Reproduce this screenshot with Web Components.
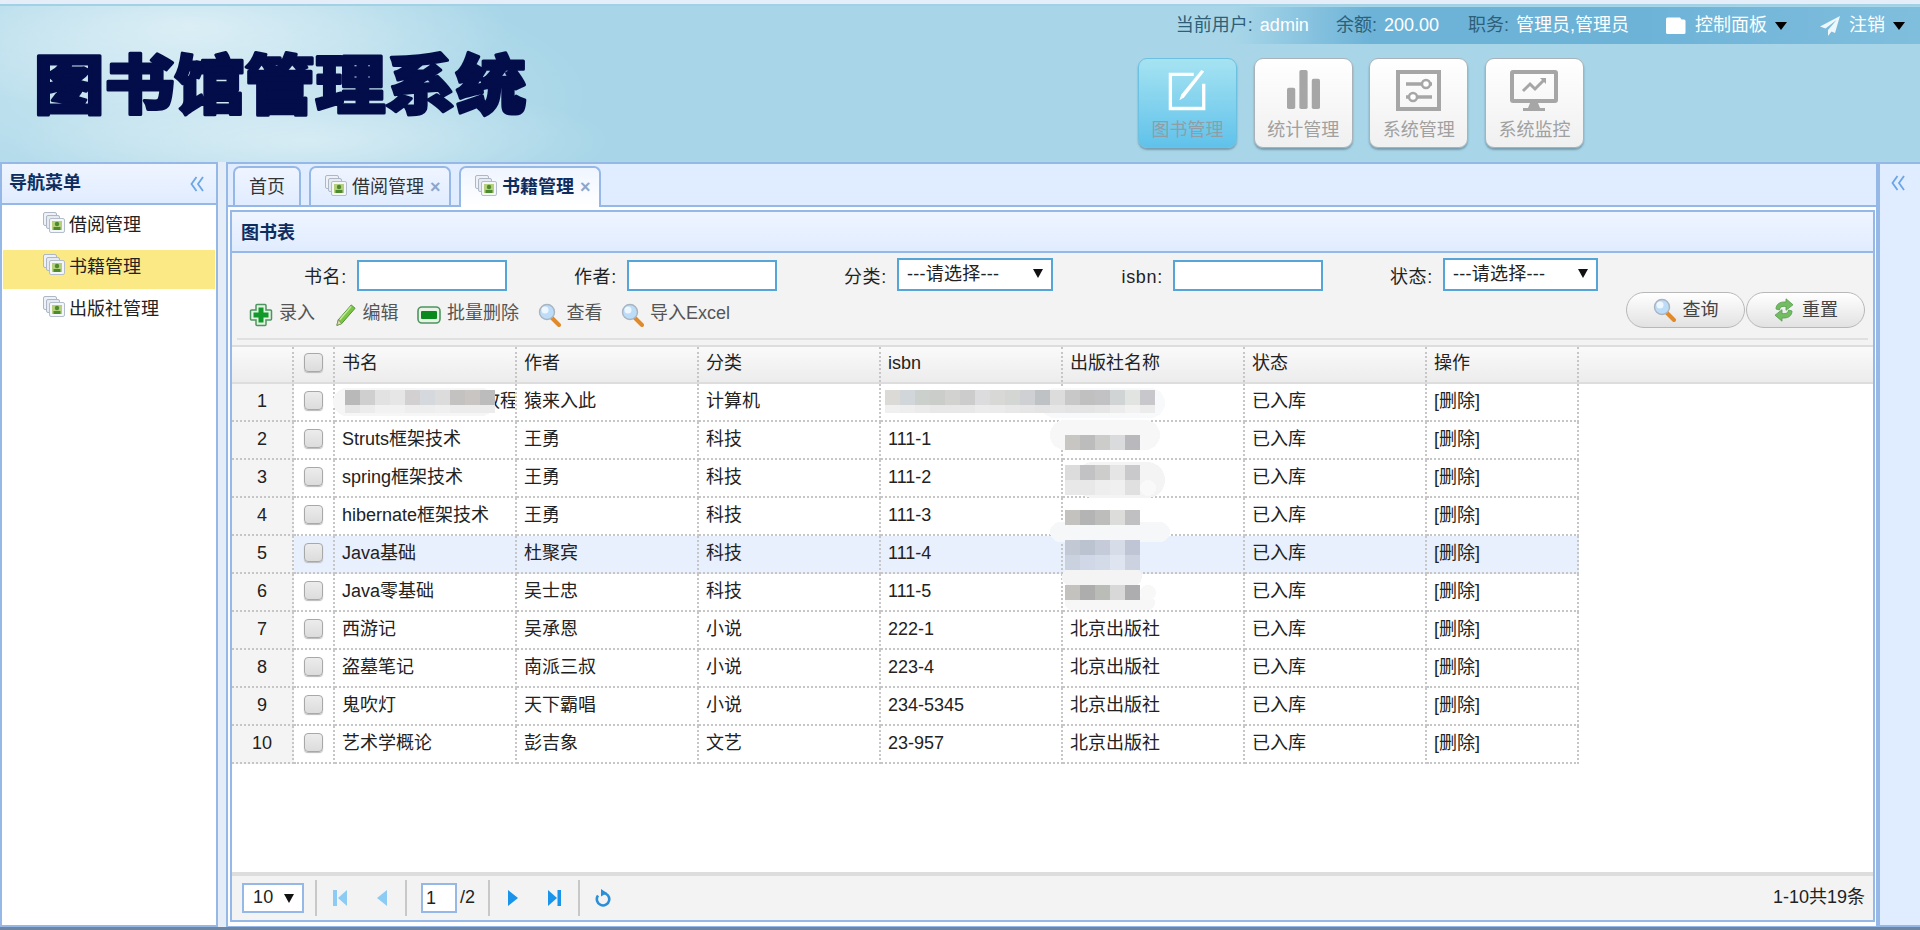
<!DOCTYPE html>
<html lang="zh">
<head>
<meta charset="utf-8">
<title>图书馆管理系统</title>
<style>
  html, body { margin: 0; height: 930px; overflow: hidden; background: #fff; }
  body { font: 18px/1.2 "Liberation Sans", "Noto Sans CJK SC", sans-serif; color: #222; }
</style>
</head>
<body>
<app-shell>
  <top-header slot="header"></top-header>
  <side-nav slot="west" heading="导航菜单">
    <nav-item>借阅管理</nav-item>
    <nav-item selected>书籍管理</nav-item>
    <nav-item>出版社管理</nav-item>
  </side-nav>
  <tab-area slot="center">
    <book-panel heading="图书表"></book-panel>
  </tab-area>
  <east-panel slot="east"></east-panel>
</app-shell>

<script>
const ICONS = {
  stack: `<svg width="22" height="21" viewBox="0 0 22 21">
    <rect x=".5" y=".5" width="13" height="13" rx="1.5" fill="#eef1f6" stroke="#aeb7c6"/>
    <rect x="3.5" y="3.5" width="13" height="13" rx="1.5" fill="#e6eaf1" stroke="#aeb7c6"/>
    <rect x="6.5" y="6.5" width="15" height="14" rx="1.5" fill="#f4f6f9" stroke="#b4bdcc"/>
    <rect x="9" y="9" width="10" height="9" fill="#b4d07c"/>
    <circle cx="14" cy="12" r="2.2" fill="#4d8a2e"/><rect x="10.5" y="15" width="7" height="3" fill="#4d8a2e"/></svg>`,
  plus: `<svg width="24" height="24" viewBox="0 0 24 24">
    <path d="M8 1.500h8a1 1 0 0 1 1 1V7h4.500a1 1 0 0 1 1 1v8a1 1 0 0 1-1 1H17v4.500a1 1 0 0 1-1 1H8a1 1 0 0 1-1-1V17H2.500a1 1 0 0 1-1-1V8a1 1 0 0 1 1-1H7V2.500a1 1 0 0 1 1-1z" fill="#e4f2e2" stroke="#4c9560" stroke-width="1.500"/>
    <path d="M9.500 4.500h5v5h5v5h-5v5h-5v-5h-5v-5h5z" fill="#0f9a2a"/></svg>`,
  pencil: `<svg width="23" height="24" viewBox="0 0 24 24">
    <path d="M18 1.500l4 3.500L8 21l-5 1.800L4.500 17z" fill="#7cc443" stroke="#4c8f30"/>
    <path d="M18 3L6 17" stroke="#c4ea9c" stroke-width="1.500"/>
    <path d="M4.500 17L8 21l-5 1.800z" fill="#e8dcb0" stroke="#6c8a50" stroke-width=".7"/></svg>`,
  minus: `<svg width="24" height="18" viewBox="0 0 24 18">
    <rect x="1" y="1" width="22" height="16" rx="4" fill="#e8f3e6" stroke="#4c9560" stroke-width="1.600"/>
    <rect x="4" y="5" width="16" height="8" rx="1" fill="#0a8a1e"/></svg>`,
  search: `<svg width="23" height="24" viewBox="0 0 23 24">
    <path d="M13.500 14.500L21 22" stroke="#e08a2c" stroke-width="4" stroke-linecap="round"/>
    <circle cx="9" cy="9" r="7.500" fill="#bcdcf8" stroke="#a8b4c0" stroke-width="1.400"/>
    <circle cx="7" cy="7" r="3.500" fill="#eef7ff"/></svg>`,
  reload: `<svg width="22" height="24" viewBox="0 0 22 24">
    <path d="M3 11C3 6 7 3.500 13 4V.8l7 6-7 5.500V8.500C8.500 8 7 9 6.500 12z" fill="#72bd62" stroke="#559a4e" stroke-width=".8"/>
    <path d="M19 13c0 5-4 7.500-10 7v3.200l-7-6 7-5.500v3.800c4.500.5 6-.5 6.500-3.500z" fill="#72bd62" stroke="#559a4e" stroke-width=".8"/></svg>`,
  first: `<svg width="14" height="16" viewBox="0 0 14 16"><path d="M0 0h4v16H0zM14 0v16L5 8z" fill="#8ccbf3"/></svg>`,
  prev: `<svg width="10" height="16" viewBox="0 0 10 16"><path d="M10 0v16L0 8z" fill="#8ccbf3"/></svg>`,
  next: `<svg width="10" height="16" viewBox="0 0 10 16"><path d="M0 0v16l10-8z" fill="#1a94ea"/></svg>`,
  last: `<svg width="13" height="16" viewBox="0 0 13 16"><path d="M0 0v16l9-8zM9.500 0H13v16H9.500z" fill="#1a94ea"/></svg>`,
  refresh: `<svg width="16" height="18" viewBox="0 0 16 18"><path d="M8 4a6.200 6.200 0 1 1-5 2.600" fill="none" stroke="#2a8fd8" stroke-width="2.600"/><path d="M6 0l6 4-6 3.500z" fill="#2a8fd8"/></svg>`,
  chevrons: `<svg width="14" height="16" viewBox="0 0 14 16" fill="none" stroke="#6aa5e8" stroke-width="1.800"><path d="M6.500 1L1.500 8l5 7M13 1L8 8l5 7"/></svg>`,
  folder: `<svg width="21" height="17" viewBox="0 0 21 17"><path d="M2.500 .5H15l1.500 2h2.500Q20.500 2.500 20.500 4v11.500Q20.500 17 19 17H2.500Q1 17 1 15.500V2Q1 .5 2.500 .5z" fill="#fff"/></svg>`,
  send: `<svg width="20" height="20" viewBox="0 0 20 20"><path d="M20 0L0 10.500l5.500 2L16.500 4 8 14v6l3.500-4.500 3.500 1.500z" fill="#eef7fb"/></svg>`,
  edit: `<svg width="40" height="41" viewBox="0 0 42 42" preserveAspectRatio="none" fill="none" stroke="#fff">
    <path d="M27 4.500H2.500v35h35V14" stroke-width="3.500"/>
    <path d="M38 1.500L17 28l-5 3 2-6L35 0z" fill="#fff" stroke="none"/></svg>`,
  bars: `<svg width="33" height="39" viewBox="0 0 36 44" preserveAspectRatio="none" fill="#a6a6a6"><rect x="0" y="20" width="9" height="24" rx="2"/><rect x="13.500" y="0" width="9" height="44" rx="2"/><rect x="27" y="10" width="9" height="34" rx="2"/></svg>`,
  sliders: `<svg width="45" height="41" viewBox="0 0 45 41" fill="none" stroke="#a6a6a6"><rect x="2" y="2" width="41" height="37" stroke-width="4"/><path d="M10 14h26M10 27h26" stroke-width="3.500"/><circle cx="30" cy="14" r="4" fill="#fff" stroke-width="2.500"/><circle cx="17" cy="27" r="4" fill="#fff" stroke-width="2.500"/></svg>`,
  monitor: `<svg width="48" height="41" viewBox="0 0 48 41" fill="none" stroke="#a6a6a6"><rect x="2" y="2" width="44" height="29" rx="1" stroke-width="4"/><path d="M13 21l7-7 5 5 9-9" stroke-width="3"/><path d="M30 8h6v6z" fill="#a6a6a6" stroke="none"/><path d="M20 33h8l2 5H18z" fill="#a6a6a6" stroke="none"/><rect x="13" y="38" width="22" height="3" fill="#a6a6a6" stroke="none"/></svg>`
};

class UiIcon extends HTMLElement {
  connectedCallback() {
    this.attachShadow({ mode: 'open' });
    this.shadowRoot.innerHTML = `<style>:host{display:inline-flex;flex:none;align-items:center;justify-content:center}svg{display:block}</style>${ICONS[this.getAttribute('name')]}`;
  }
}

class AppShell extends HTMLElement {
  connectedCallback() {
    this.attachShadow({ mode: 'open' });
    this.shadowRoot.innerHTML = `
      <style>
        :host { display: flex; flex-direction: column; height: 930px; padding-top: 4px; box-sizing: border-box; background: #e5edf8; }
        .middle { display: flex; flex: none; height: 765px; }
        .foot { flex: 1; background: #6e86a6; }
        ::slotted([slot=west]) { flex: none; width: 218px; margin-right: 8px; }
        ::slotted([slot=center]) { flex: 1; min-width: 0; }
        ::slotted([slot=east]) { flex: none; width: 44px; }
      </style>
      <slot name="header"></slot>
      <div class="middle">
        <slot name="west"></slot><slot name="center"></slot><slot name="east"></slot>
      </div>
      <div class="foot"></div>`;
  }
}

class TopHeader extends HTMLElement {
  connectedCallback() {
    this.attachShadow({ mode: 'open' });
    const buttons = [['edit', '图书管理', true], ['bars', '统计管理'], ['sliders', '系统管理'], ['monitor', '系统监控']];
    this.shadowRoot.innerHTML = `
      <style>
        :host { display: grid; grid-template-columns: 1fr 782px; height: 158px; box-sizing: border-box;
          border-top: 2px solid #a0d2e6;
          background:
            radial-gradient(ellipse 320px 90px at 190px 20px, rgba(255,255,255,.5), transparent),
            radial-gradient(ellipse 300px 60px at 310px 135px, rgba(255,255,255,.42), transparent),
            radial-gradient(ellipse 420px 130px at 170px 90px, rgba(255,255,255,.38), transparent),
            #a8d6e8; }
        .logo { padding: 12px 0 0 28px; }
        .logo svg { display: block; }
        .logo text { font: 900 64px "Noto Sans CJK SC", sans-serif; fill: #030d4a; stroke: #030d4a; stroke-width: 3px; stroke-linejoin: round; }
        .side { display: flex; flex-direction: column; min-width: 0; }
        .strip { display: flex; align-items: center; justify-content: flex-end; height: 37px; margin: 1px 0 0 95px; padding: 0 15px 0 0;
          color: #2d5f78; white-space: nowrap; box-sizing: border-box;
          background: linear-gradient(90deg, rgba(109,179,216,0), #6db3d8 20%, #6db3d8 60%, #80bedd); }
        b { font-weight: normal; color: #fff; margin-left: 7px; }
        .caret { width: 0; height: 0; border: 6.500px solid transparent; border-top: 8px solid #000; border-bottom: 0; margin-left: 8px; }
        .g1 { margin-right: 27px; } .g2 { margin-right: 29px; } .g3 { margin-right: 36px; } .g4 { margin-right: 33px; }
        .link { color: #fff; margin-left: 9px; }
        .btns { display: flex; gap: 16.670px; margin-top: 14px; }
        .btn { width: 99px; height: 90px; box-sizing: border-box; border-radius: 9px; border: 1px solid #a9b2b8;
          background: linear-gradient(#fff, #f0f0f0); box-shadow: 0 2px 2px rgba(80,110,130,.55);
          display: flex; flex-direction: column; align-items: center; color: #a0a0a0; }
        .btn.on { border-color: #6cc0e2; background: linear-gradient(#a6e3f2, #60c2ea); color: #8f9ea6; }
        .ic { height: 61px; display: flex; align-items: flex-start; padding-top: 11px; box-sizing: border-box; }
      </style>
      <div class="logo"><svg width="540" height="130"><text x="6" y="90" textLength="492" lengthAdjust="spacingAndGlyphs">图书馆管理系统</text></svg></div>
      <div class="side">
        <div class="strip">
          <span class="g1">当前用户:<b>admin</b></span>
          <span class="g2">余额:<b>200.00</b></span>
          <span class="g3">职务:<b>管理员,管理员</b></span>
          <ui-icon name="folder"></ui-icon><span class="link">控制面板</span><i class="caret g4"></i>
          <ui-icon name="send"></ui-icon><span class="link">注销</span><i class="caret"></i>
        </div>
        <div class="btns">
          ${buttons.map(([icon, label, on]) => `<div class="btn ${on ? 'on' : ''}"><div class="ic"><ui-icon name="${icon}"></ui-icon></div><span>${label}</span></div>`).join('')}
        </div>
      </div>`;
  }
}

class SideNav extends HTMLElement {
  connectedCallback() {
    this.attachShadow({ mode: 'open' });
    this.shadowRoot.innerHTML = `
      <style>
        :host { display: flex; flex-direction: column; box-sizing: border-box; border: 2px solid #95b8e7; background: #fff; }
        .head { display: flex; align-items: center; justify-content: space-between; height: 38px; padding: 1px 12px 0 7px; flex: none; box-sizing: content-box;
          border-bottom: 2px solid #95b8e7; background: linear-gradient(#eff5ff, #e0ecff);
          font-weight: bold; color: #0e2d5f; }
      </style>
      <div class="head"><span>${this.getAttribute('heading')}</span><ui-icon name="chevrons"></ui-icon></div>
      <slot></slot>`;
  }
}

class NavItem extends HTMLElement {
  connectedCallback() {
    this.attachShadow({ mode: 'open' });
    this.shadowRoot.innerHTML = `
      <style>
        :host { display: block; padding: 3px 1px 0; }
        .row { display: flex; align-items: center; gap: 4px; height: 39px; padding: 0 0 3px 40px; box-sizing: border-box; }
        ui-icon { margin-bottom: 8px; }
        :host([selected]) .row { background: #fbe985; }
      </style>
      <div class="row"><ui-icon name="stack"></ui-icon><span><slot></slot></span></div>`;
  }
}

class TabArea extends HTMLElement {
  connectedCallback() {
    this.attachShadow({ mode: 'open' });
    const tab = (label, cls, icon, close) => `<div class="tab ${cls}">${icon ? '<ui-icon name="stack"></ui-icon>' : ''}<span>${label}</span>${close ? '<em>×</em>' : ''}</div>`;
    this.shadowRoot.innerHTML = `
      <style>
        :host { display: flex; flex-direction: column; box-sizing: border-box; border: solid #95b8e7; border-width: 2px 0 1px 2px; background: #fff; }
        .tabs { display: flex; gap: 8px; flex: none; height: 43px; box-sizing: border-box; padding: 2px 0 0 5px; background: #e0ecff; border-bottom: 2px solid #95b8e7; }
        .tab { display: flex; align-items: center; width: 142px; height: 39px; box-sizing: border-box; padding: 2px 0 0 14px; gap: 5px; border: 2px solid #95b8e7; border-bottom: 0; border-radius: 7px 7px 0 0;
          background: linear-gradient(#eff5ff, #e0ecff); color: #333; }
        .tab ui-icon { margin-bottom: 4px; }
        .home { width: 68px; justify-content: center; padding: 2px 0 0; }
        .tab.on { height: 41px; padding-bottom: 2px; background: linear-gradient(#eff5ff, #fff); font-weight: bold; color: #0e2d5f; position: relative; }
        em { font: bold 18px "Liberation Sans", sans-serif; color: #8ea6c8; margin-left: 1px; }
        .body { flex: 1; min-height: 0; display: flex; padding: 3px 1px 4px 2px; }
        ::slotted(*) { flex: 1; min-width: 0; }
      </style>
      <div class="tabs">
        ${tab('首页', 'home')}${tab('借阅管理', '', true, true)}${tab('书籍管理', 'on', true, true)}
      </div>
      <div class="body"><slot></slot></div>`;
  }
}

class EastPanel extends HTMLElement {
  connectedCallback() {
    this.attachShadow({ mode: 'open' });
    this.shadowRoot.innerHTML = `
      <style>
        :host { display: block; box-sizing: border-box; border-left: 4px solid #95b8e7; border-top: 2px solid #95b8e7; border-bottom: 2px solid #95b8e7; background: #e0ecff; padding: 11px 0 0 11px; }
      </style>
      <ui-icon name="chevrons"></ui-icon>`;
  }
}

class BookPanel extends HTMLElement {
  connectedCallback() {
    this.attachShadow({ mode: 'open' });
    this.shadowRoot.innerHTML = `
      <style>
        :host { display: flex; flex-direction: column; box-sizing: border-box; border: 2px solid #95b8e7; background: #fff; }
        .title { flex: none; height: 39px; box-sizing: border-box; padding: 4px 0 0 9px; display: flex; align-items: center;
          background: linear-gradient(#eff5ff, #e0ecff); font-weight: bold; color: #0e2d5f; }
        .rule { flex: none; height: 2px; background: #95b8e7; }
        book-toolbar { flex: none; }
        book-grid { flex: 1; min-height: 0; }
        grid-pager { flex: none; }
      </style>
      <div class="title">${this.getAttribute('heading')}</div>
      <div class="rule"></div>
      <book-toolbar></book-toolbar>
      <book-grid></book-grid>
      <grid-pager></grid-pager>`;
  }
}

class PickBox extends HTMLElement {
  connectedCallback() {
    this.attachShadow({ mode: 'open' });
    const options = (this.getAttribute('options') || '').split('|');
    this.shadowRoot.innerHTML = `
      <style>
        :host { display: block; position: relative; height: 33px; box-sizing: border-box; border: 2px solid var(--pick-border, #55a5d8); background: #fff; }
        select { appearance: none; -webkit-appearance: none; display: block; width: 100%; height: 100%; border: 0; outline: 0; margin: 0; background: transparent;
          font: inherit; letter-spacing: .25px; color: #222; padding: 0 0 0 var(--pick-pad, 8px); }
        i { position: absolute; right: 8px; top: 9px; width: 0; height: 0; border: 5px solid transparent; border-top: 9px solid #111; border-bottom: 0; }
      </style>
      <select>${options.map(o => `<option>${o}</option>`).join('')}</select><i></i>`;
  }
}

class BookToolbar extends HTMLElement {
  connectedCallback() {
    this.attachShadow({ mode: 'open' });
    const tools = [['plus', '录入'], ['pencil', '编辑'], ['minus', '批量删除'], ['search', '查看'], ['search', '导入Excel']];
    this.shadowRoot.innerHTML = `
      <style>
        :host { display: block; height: 92px; box-sizing: border-box; background: #f3f3f3; padding-top: 5px; }
        .form { display: grid; grid-template-columns: 125px 150px 120px 150px 120px 156px 120px 150px 120px 155px; height: 33px; align-items: end; }
        label { text-align: right; padding: 0 10px 2px 0; letter-spacing: .7px; }
        input { display: block; width: 150px; height: 31px; box-sizing: border-box; border: 2px solid #55a5d8; outline: 0; margin: 0; padding: 0 6px; background: #fff; }
        .acts { display: flex; align-items: center; height: 37px; padding: 1px 8px 0 17px; box-sizing: border-box; }
        .tool { display: flex; align-items: center; gap: 6px; margin-right: 18.500px; color: #555; padding-top: 9px; }
        .tool span { position: relative; top: -1px; }
        .btn { display: flex; align-items: center; justify-content: center; gap: 7px; width: 119px; height: 36px; box-sizing: border-box; border: 1px solid #b8b8b8; border-radius: 18px;
          background: linear-gradient(#fff, #e2e2e2); color: #444; }
        .btn span { padding-top: 2px; }
        .btn.query { margin-left: auto; }
        .btn + .btn { margin-left: 1px; }
        .line { height: 2px; margin: 10px 5px 0; background: #e0e0e0; }
      </style>
      <div class="form">
        <label>书名:</label><input>
        <label>作者:</label><input>
        <label>分类:</label><pick-box options="---请选择---"></pick-box>
        <label>isbn:</label><input>
        <label>状态:</label><pick-box options="---请选择---"></pick-box>
      </div>
      <div class="acts">
        ${tools.map(([icon, label]) => `<div class="tool"><ui-icon name="${icon}"></ui-icon><span>${label}</span></div>`).join('')}
        <div class="btn query"><ui-icon name="search"></ui-icon><span>查询</span></div>
        <div class="btn"><ui-icon name="reload"></ui-icon><span>重置</span></div>
      </div>
      <div class="line"></div>`;
  }
}

const COLUMNS = ['书名', '作者', '分类', 'isbn', '出版社名称', '状态', '操作'];
const BOOKS = [
  ['', '猿来入此', '计算机', '', ''],
  ['Struts框架技术', '王勇', '科技', '111-1', ''],
  ['spring框架技术', '王勇', '科技', '111-2', ''],
  ['hibernate框架技术', '王勇', '科技', '111-3', ''],
  ['Java基础', '杜聚宾', '科技', '111-4', ''],
  ['Java零基础', '吴士忠', '科技', '111-5', ''],
  ['西游记', '吴承恩', '小说', '222-1', '北京出版社'],
  ['盗墓笔记', '南派三叔', '小说', '223-4', '北京出版社'],
  ['鬼吹灯', '天下霸唱', '小说', '234-5345', '北京出版社'],
  ['艺术学概论', '彭吉象', '文艺', '23-957', '北京出版社']
];

// painted-over patches from the screenshot, in page coordinates: x, y, block height, colours
const MOSAIC = [
  [345, 390, 15, ['#b9b9b9', '#cfcfcf', '#e2e2e2', '#e6e6e6', '#d2d0d0', '#d5d9dd', '#dcdcdc', '#c4c2c0', '#c9c5c3', '#bcbcbc']],
  [345, 405, 8, ['#e6e6e6', '#ececec', '#f2f2f2', '#f2f2f2', '#eeeeee', '#eeeeee', '#f0f0f0', '#ececec', '#ececec', '#ececec']],
  [885, 390, 15, ['#dcdad6', '#d0d6da', '#ccd0cc', '#cbcdcb', '#d2d2d0', '#cccccc', '#dcdcdf', '#d8d8d6', '#d4d6d4', '#ced0d4', '#bfc2c4', '#dcdcdc', '#c8c8c8', '#c0c0c0', '#c2c2c4', '#d0d4d4', '#e2e4e2', '#c8c7cb']],
  [885, 405, 8, ['#f0f0f0', '#eeeeee', '#ebebeb', '#e8e8e8', '#e8e8e8', '#e8e8e8', '#ececec', '#ebebeb', '#e8e8e8', '#e6e6e6', '#e4e4e4', '#e6e6e6', '#e4e4e4', '#e4e4e4', '#e6e6e6', '#ececec', '#f2f2f2', '#ececec']],
  [1065, 435, 15, ['#c8c6c2', '#bcbcbc', '#cccdcb', '#dadbdc', '#b9b8bc']],
  [1065, 465, 15, ['#dcdcdc', '#c2c2c4', '#cdcdcb', '#e5e5e5', '#c9c9cb']],
  [1065, 480, 15, ['#e8e8e8', '#e8e8e8', '#eeeeee', '#f0f0f0', '#e0e0e0']],
  [1065, 510, 15, ['#c4c2be', '#b4b4b4', '#bdbdbb', '#dcdddb', '#c0bfc2']],
  [1065, 540, 15, ['#c3c9d4', '#bcc3d0', '#c5cbd8', '#d6dce8', '#bfc5d5']],
  [1065, 555, 15, ['#cad2e0', '#d0d7e6', '#d4dbe8', '#dfe5f0', '#ccd2e0']],
  [1065, 585, 15, ['#c4c2be', '#adadad', '#babcb8', '#d8d8d8', '#adadaf']]
];
const SMEARS = [
  [333, 388, 162, 28, '#f6f6f6'], [1040, 388, 125, 30, '#f8f9fb'], [1050, 420, 110, 30, '#f7f7f8'], [1075, 462, 90, 36, '#f4f4f4'],
  [1050, 522, 120, 20, '#f6f7f9'], [1062, 568, 80, 18, '#f4f4f4'], [1065, 596, 90, 14, '#f7f7f8'],
  [1140, 390, 16, 18, '#fbfcfd'], [1140, 480, 16, 16, '#f9f9f9'], [1140, 585, 16, 15, '#f8f8f8']
];

class BookGrid extends HTMLElement {
  connectedCallback() {
    this.attachShadow({ mode: 'open' });
    const cells = (row, i) => row.map((text, c) => {
      const extra = i === 0 && c === 0 ? '<span class="cut">教程</span>' : text;
      return `<div class="c">${extra}</div>`;
    }).join('');
    const patches = MOSAIC.map(([x, y, h, colors]) => colors.map((fill, i) =>
      `<rect x="${x + i * 15}" y="${y}" width="15" height="${h}" fill="${fill}"/>`).join('')).join('');
    const smears = SMEARS.map(([x, y, w, h, fill]) => `<rect x="${x}" y="${y}" width="${w}" height="${h}" rx="${h / 2}" fill="${fill}"/>`).join('');
    this.shadowRoot.innerHTML = `
      <style>
        :host { display: block; position: relative; background: #fff; overflow: hidden; }
        .r { display: grid; grid-template-columns: 62px 41px repeat(6, 182px) 152px; height: 38px; width: 1347px; }
        .head { height: 39px; width: auto; grid-template-columns: 62px 41px repeat(6, 182px) 152px 1fr; box-sizing: border-box; border: solid #dddddd; border-width: 2px 0; background: linear-gradient(#fafafa, #ececec); }
        .c, .n, .k { box-sizing: border-box; border-right: 2px dotted #c6c6c6; border-bottom: 2px dotted #c6c6c6; display: flex; align-items: center; white-space: nowrap; overflow: hidden; }
        .c { padding: 0 0 0 7px; }
        .n { justify-content: center; background: #f4f4f4; }
        .k { justify-content: center; padding-bottom: 4px; }
        .head > div { border-bottom: 0; }
        .head > .c { padding-bottom: 2px; }
        .head > div:last-child { border-right: 0; }
        .hover .c, .hover .k { background: #e8f0fd; }
        .box { width: 19px; height: 19px; box-sizing: border-box; border: 1px solid #a8a8a8; border-radius: 4px; background: linear-gradient(#ececec, #dcdcdc); box-shadow: 0 1px 1px #bbb; }
        .cut { padding-left: 140px; }
        svg { position: absolute; left: 0; top: 0; }
      </style>
      <div class="r head">
        <div class="n" style="background:none"></div><div class="k"><i class="box"></i></div>
        ${COLUMNS.map(c => `<div class="c">${c}</div>`).join('')}<div class="c"></div>
      </div>
      ${BOOKS.map((b, i) => `
        <div class="r ${i === 4 ? 'hover' : ''}">
          <div class="n">${i + 1}</div><div class="k"><i class="box"></i></div>
          ${cells(b, i)}<div class="c">已入库</div><div class="c">[删除]</div>
        </div>`).join('')}
      <svg width="1641" height="420" viewBox="232 345 1641 420" shape-rendering="crispEdges">${smears}${patches}</svg>`;
  }
}

class GridPager extends HTMLElement {
  connectedCallback() {
    this.attachShadow({ mode: 'open' });
    this.shadowRoot.innerHTML = `
      <style>
        :host { display: flex; align-items: center; height: 48px; box-sizing: border-box; border-top: 4px solid #dddddd; background: #f3f3f3; padding: 0 8px 0 10px; }
        pick-box { width: 62px; height: 30px; margin-right: 11px; --pick-border: #95b8e7; --pick-pad: 9px; }
        .sep { width: 2px; height: 36px; background: #c8c8c8; flex: none; }
        .nav { display: flex; align-items: center; justify-content: space-between; width: 88px; box-sizing: border-box; padding: 0 18px 0 16px; }
        .nav.fwd { padding: 0 17px 0 18px; }
        .page { display: flex; align-items: center; width: 81px; box-sizing: border-box; padding-left: 14px; }
        input { display: block; width: 36px; height: 30px; box-sizing: border-box; border: 2px solid #95b8e7; outline: 0; margin: 0 3px 0 0; padding: 0 0 0 3px; font: inherit; color: #222; background: #fff; }
        .ref { margin-left: 15px; }
        .total { margin-left: auto; color: #222; }
      </style>
      <pick-box options="10"></pick-box>
      <i class="sep"></i>
      <div class="nav"><ui-icon name="first"></ui-icon><ui-icon name="prev"></ui-icon></div>
      <i class="sep"></i>
      <div class="page"><input value="1"><span>/2</span></div>
      <i class="sep"></i>
      <div class="nav fwd"><ui-icon name="next"></ui-icon><ui-icon name="last"></ui-icon></div>
      <i class="sep"></i>
      <ui-icon class="ref" name="refresh"></ui-icon>
      <span class="total">1-10共19条</span>`;
  }
}

customElements.define('ui-icon', UiIcon);
customElements.define('pick-box', PickBox);
customElements.define('nav-item', NavItem);
customElements.define('side-nav', SideNav);
customElements.define('top-header', TopHeader);
customElements.define('tab-area', TabArea);
customElements.define('east-panel', EastPanel);
customElements.define('book-toolbar', BookToolbar);
customElements.define('book-grid', BookGrid);
customElements.define('grid-pager', GridPager);
customElements.define('book-panel', BookPanel);
customElements.define('app-shell', AppShell);
</script>
</body>
</html>
